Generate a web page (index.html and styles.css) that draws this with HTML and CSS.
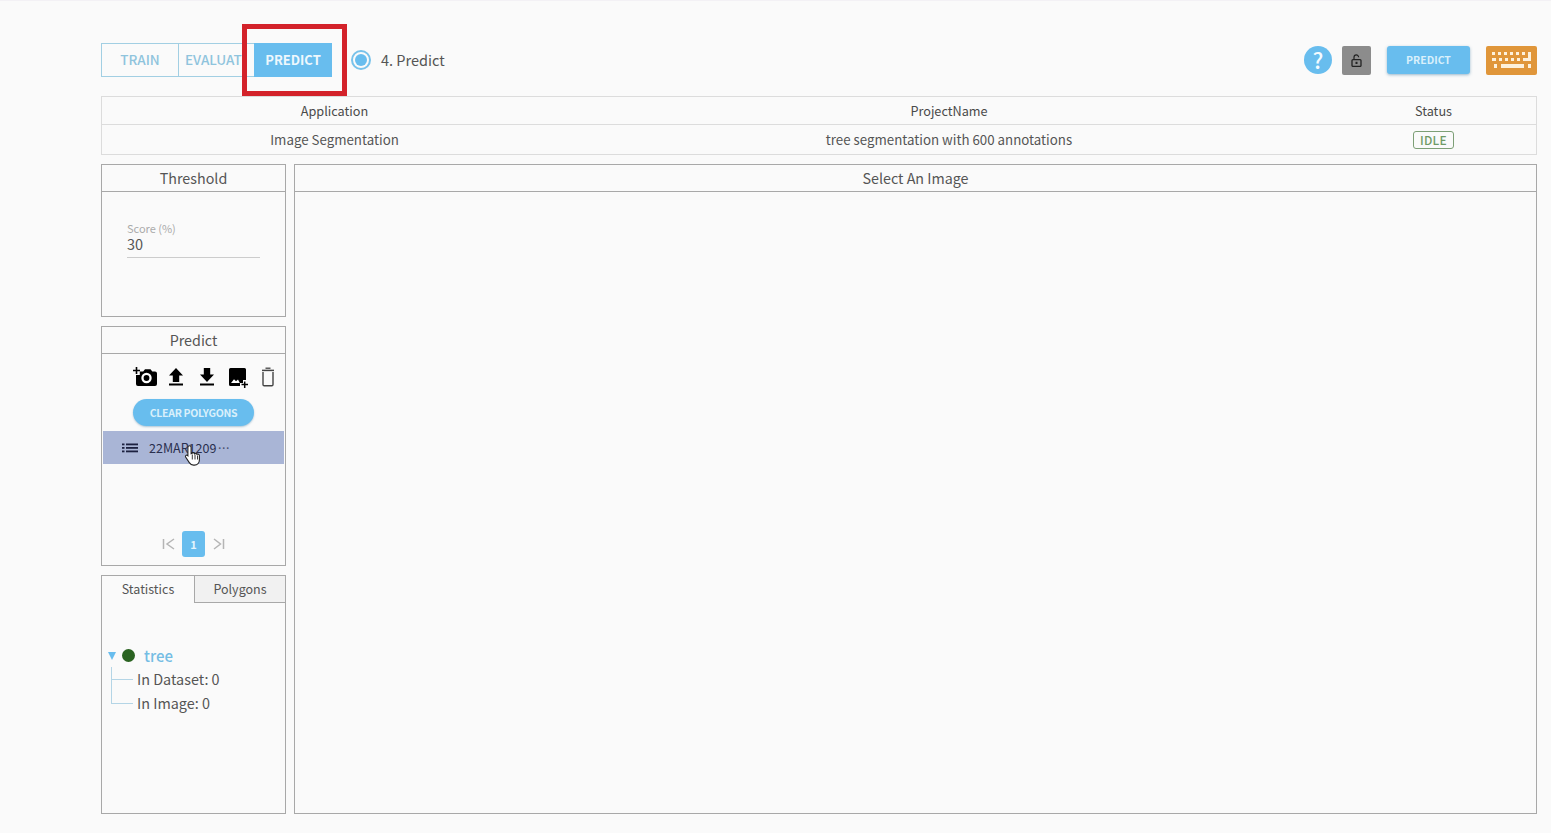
FILE: index.html
```html
<!DOCTYPE html>
<html lang="en">
<head>
<meta charset="utf-8">
<title>Predict</title>
<link rel="stylesheet" href="styles.css">
</head>
<body>
<div class="page">
  <header class="toolbar">
    <div class="steps">
      <button class="step step-train">TRAIN</button>
      <button class="step step-eval"><span class="step-clip">EVALUATE</span></button>
      <button class="step step-active">PREDICT</button>
      <div class="highlight"></div>
    </div>
    <span class="radio"><span class="radio-dot"></span></span>
    <span class="step-label">4. Predict</span>
    <div class="actions">
      <span class="help">?</span>
      <span class="lock">
        <svg width="11" height="13" viewBox="0 0 11 13"><path d="M3 6V3.200a2.300 2.300 0 0 1 4.600 0" fill="none" stroke="#222" stroke-width="1.200"/><rect x="1" y="5.600" width="9" height="6.800" rx="1" fill="none" stroke="#222" stroke-width="1.300"/><rect x="4.500" y="7.800" width="2" height="2.200" fill="#222"/></svg>
      </span>
      <button class="predict-btn">PREDICT</button>
      <span class="keyboard">
        <svg width="40" height="17" viewBox="0 0 40 17" fill="#fdf1dc"><rect x="0" y="0" width="3" height="3"/><rect x="6" y="0" width="3" height="3"/><rect x="12" y="0" width="3" height="3"/><rect x="18" y="0" width="3" height="3"/><rect x="24" y="0" width="3" height="3"/><rect x="30" y="0" width="3" height="3"/><rect x="36" y="0" width="3" height="9"/><rect x="0" y="6" width="4" height="3"/><rect x="7" y="6" width="3" height="3"/><rect x="13" y="6" width="3" height="3"/><rect x="19" y="6" width="3" height="3"/><rect x="25" y="6" width="3" height="3"/><rect x="31" y="6" width="8" height="3"/><rect x="2" y="12" width="3" height="4"/><rect x="9" y="12" width="23" height="4"/><rect x="36" y="12" width="3" height="4"/></svg>
      </span>
    </div>
  </header>

  <section class="info">
    <div class="info-row info-head">
      <div>Application</div>
      <div>ProjectName</div>
      <div>Status</div>
    </div>
    <div class="info-row info-body">
      <div>Image Segmentation</div>
      <div>tree segmentation with 600 annotations</div>
      <div><span class="badge">IDLE</span></div>
    </div>
  </section>

  <main class="workspace">
    <aside class="sidebar">
      <section class="panel panel-threshold">
        <h2 class="panel-title">Threshold</h2>
        <div class="field">
          <div class="field-label">Score (%)</div>
          <div class="field-value">30</div>
        </div>
      </section>

      <section class="panel panel-predict">
        <h2 class="panel-title">Predict</h2>
        <div class="tools">
          <svg width="24" height="24" viewBox="0 0 24 24"><path d="M0 5.500h7M3.500 2v7" stroke="#000" stroke-width="1.600" fill="none"/><path d="M3 10h3.800V6.500h3.400L12 4.200h5.500l1.800 2.300h2.700A2 2 0 0 1 24 8.500V19a2 2 0 0 1-2 2H5a2 2 0 0 1-2-2z" fill="#000"/><circle cx="13.500" cy="13" r="5.200" fill="#fff"/><circle cx="13.500" cy="13" r="2.900" fill="#000"/></svg>
          <svg width="20" height="24" viewBox="0 0 20 24"><path d="M9 3l7 7.500h-3.800V17H5.800v-6.500H2z" fill="#000"/><rect x="2" y="18.500" width="14" height="2" fill="#000"/></svg>
          <svg width="20" height="24" viewBox="0 0 20 24"><path d="M6.800 3h6.400v6.500H17L10 17 3 9.500h3.800z" fill="#000"/><rect x="3" y="18.500" width="14" height="2" fill="#000"/></svg>
          <svg width="22" height="24" viewBox="0 0 22 24"><path d="M3.500 3h14A1.500 1.500 0 0 1 19 4.500V15h-3v3h-3v3H3.500A1.500 1.500 0 0 1 2 19.500v-15A1.500 1.500 0 0 1 3.500 3z" fill="#000"/><path d="M4 18l3-3.800 2 2 2-1.700 1.800 3.500z" fill="#fff"/><path d="M14.500 19.500h6.500M17.700 16.500v6.500" stroke="#000" stroke-width="1.500"/></svg>
          <svg width="18" height="24" viewBox="0 0 18 24"><path d="M4 7v12.500c0 .7.500 1.200 1.200 1.200h7.600c.7 0 1.200-.5 1.200-1.200V7" fill="none" stroke="#444" stroke-width="1.400"/><path d="M3 5.400h12" stroke="#444" stroke-width="1.500"/><path d="M6.500 3.200h5" stroke="#444" stroke-width="1.300"/></svg>
        </div>
        <div class="clear-wrap"><button class="clear-btn">CLEAR POLYGONS</button></div>
        <div class="list-item">
          <svg class="list-icon" width="16" height="10" viewBox="0 0 16 10" fill="#1c2140"><rect x="0" y="0.500" width="2.500" height="1.800"/><rect x="4" y="0.500" width="12" height="1.800"/><rect x="0" y="4" width="2.500" height="1.800"/><rect x="4" y="4" width="12" height="1.800"/><rect x="0" y="7.500" width="2.500" height="1.800"/><rect x="4" y="7.500" width="12" height="1.800"/></svg>
          <span class="list-name">22MAR1209<span class="list-more">···</span></span>
          <svg class="cursor" width="18" height="25" viewBox="0 0 18 24"><path d="M5.500 2.200c1 0 1.600.7 1.600 1.700v6.300l1-.3c.2-1 1.900-1 2.300.1l.2.300c.6-.8 2.200-.6 2.400.5.900-.5 2.300 0 2.400 1.200v4.300c0 3-2 5.300-5 5.300H9.500c-2 0-3.200-1-4.200-2.500L1.600 13.500c-.7-1.200 1-2.600 2.100-1.500l.2.200V3.900c0-1 .6-1.700 1.600-1.700z" fill="#fff" stroke="#222" stroke-width="1.100"/><path d="M8.300 11v5M11 11v5M13.500 12v4" stroke="#222" stroke-width=".9"/></svg>
        </div>
        <nav class="pager">
          <svg width="14" height="12" viewBox="0 0 14 12"><path d="M2.500 1v10M13 1L6 6l7 5" fill="none" stroke="#b5b5b5" stroke-width="1.500"/></svg>
          <span class="page-num">1</span>
          <svg width="14" height="12" viewBox="0 0 14 12"><path d="M11.500 1v10M2 1l6.500 5L2 11" fill="none" stroke="#b5b5b5" stroke-width="1.500"/></svg>
        </nav>
      </section>

      <section class="panel panel-stats">
        <div class="tabs">
          <div class="tab tab-active">Statistics</div>
          <div class="tab tab-idle">Polygons</div>
        </div>
        <div class="tree">
          <div class="tree-root">
            <span class="caret"></span>
            <span class="tree-dot"></span>
            <span class="tree-name">tree</span>
          </div>
          <div class="tree-leaf leaf-first">In Dataset: 0</div>
          <div class="tree-leaf leaf-last">In Image: 0</div>
        </div>
      </section>
    </aside>

    <section class="panel panel-image">
      <h2 class="panel-title">Select An Image</h2>
    </section>
  </main>
</div>
</body>
</html>
```
FILE: styles.css
```css
* { box-sizing: border-box; }
html, body { margin: 0; height: 100%; }
body {
  background: #fafafa;
  color: #444;
  font-family: "Noto Sans CJK KR", "Noto Sans", sans-serif;
  font-size: 14px;
  overflow: hidden;
}
button { font-family: inherit; cursor: pointer; }
.page {
  height: 833px;
  padding: 43px 14px 19px 101px;
  display: flex;
  flex-direction: column;
  border-top: 1px solid #f3f1f5;
}
.toolbar {
  display: flex;
  align-items: center;
  height: 34px;
  margin-top: -1px;
}
.steps { display: flex; position: relative; height: 34px; }
.step {
  height: 34px;
  padding: 0 0 2px;
  font-size: 13.500px;
  font-weight: 500;
  border: 1px solid #a2cfe3;
  background: transparent;
  color: #8fc4dd;
}
.step-train { width: 78px; }
.step-eval {
  width: 76px;
  margin-left: -1px;
  border-right: 0;
  text-align: left;
  padding-left: 6px;
}
.step-clip { display: block; width: 58px; overflow: hidden; white-space: nowrap; }
.step-active {
  width: 78px;
  border: 0;
  background: #68bdee;
  color: #eef8fd;
  font-size: 13px;
  font-weight: 700;
}
.highlight {
  position: absolute;
  left: 141px;
  top: -19px;
  width: 105px;
  height: 72px;
  border: 5px solid #d3222a;
  pointer-events: none;
}
.radio {
  width: 20px;
  height: 20px;
  margin-left: 19px;
  border: 2px solid #78c2ea;
  border-radius: 50%;
  display: flex;
  align-items: center;
  justify-content: center;
}
.radio-dot { width: 12px; height: 12px; border-radius: 50%; background: #68bdee; }
.step-label { margin: 0 0 2px 10px; font-size: 14.500px; color: #555; }
.actions { margin-left: auto; display: flex; align-items: center; }
.help {
  width: 28px;
  height: 28px;
  border-radius: 50%;
  background: #68bdee;
  color: #f4fbff;
  font-size: 22px;
  font-weight: 500;
  line-height: 27px;
  text-align: center;
}
.lock {
  width: 29px;
  height: 29px;
  margin-left: 10px;
  background: #8c8c8c;
  border-radius: 2px;
  display: flex;
  align-items: center;
  justify-content: center;
}
.predict-btn {
  width: 83px;
  height: 28px;
  margin-left: 16px;
  padding: 0 0 1px;
  border: 0;
  border-radius: 3px;
  background: #68bdee;
  color: #d9f0fb;
  font-size: 10.500px;
  font-weight: 700;
  box-shadow: 0 1px 3px rgba(60, 120, 160, .5);
}
.keyboard {
  width: 51px;
  height: 29px;
  margin-left: 16px;
  background: #e0963a;
  border-radius: 2px;
  display: flex;
  align-items: center;
  justify-content: center;
}
.info {
  margin-top: 19px;
  border: 1px solid #dcdcdc;
  height: 59px;
  display: flex;
  flex-direction: column;
}
.info-row {
  display: grid;
  grid-template-columns: 465px 764px 1fr;
  align-items: center;
  text-align: center;
}
.info-head {
  height: 28px;
  border-bottom: 1px solid #dcdcdc;
  font-size: 12.700px;
  color: #4a4a4a;
}
.info-body { flex: 1; font-size: 13.300px; color: #555; }
.badge {
  display: inline-block;
  width: 41px;
  height: 18px;
  line-height: 15px;
  border: 1px solid #7d9f76;
  border-radius: 3px;
  color: #6f9a66;
  font-size: 12px;
  font-weight: 500;
  letter-spacing: .3px;
}
.workspace {
  flex: 1;
  margin-top: 9px;
  display: flex;
  gap: 8px;
  min-height: 0;
}
.sidebar {
  width: 185px;
  display: flex;
  flex-direction: column;
  gap: 9px;
}
.panel { border: 1px solid #a8a8a8; background: #fafafa; }
.panel-title {
  margin: 0;
  height: 27px;
  line-height: 26px;
  border-bottom: 1px solid #a8a8a8;
  text-align: center;
  font-size: 14.300px;
  font-weight: 400;
  color: #555;
}
.panel-threshold { height: 153px; }
.field {
  margin: 30px 25px 0 25px;
  height: 36px;
  border-bottom: 1px solid #ccc;
}
.field-label { font-size: 11px; color: #aaa; line-height: 13px; }
.field-value { font-size: 14.500px; color: #555; line-height: 17px; }
.panel-predict {
  height: 240px;
  display: flex;
  flex-direction: column;
}
.tools {
  display: flex;
  align-items: center;
  gap: 10px;
  height: 24px;
  margin-top: 11px;
  padding-left: 31px;
}
.clear-wrap { display: flex; justify-content: center; margin-top: 10px; }
.clear-btn {
  width: 121px;
  height: 27px;
  padding: 0;
  border: 0;
  border-radius: 14px;
  background: #68bdee;
  color: #d9f0fb;
  font-size: 10.500px;
  font-weight: 700;
  letter-spacing: -.3px;
  box-shadow: 0 1px 2px rgba(60, 120, 160, .4);
}
.list-item {
  position: relative;
  height: 33px;
  margin: 5px 1px 0 1px;
  background: #a9b5d6;
  display: flex;
  align-items: center;
  padding-left: 19px;
  color: #2a2f4e;
  font-size: 12.500px;
}
.list-icon { flex: none; }
.list-name { margin-left: 11px; }
.list-more { letter-spacing: -3px; color: #4a5070; }
.cursor { position: absolute; left: 81px; top: 12px; }
.pager {
  margin-top: auto;
  margin-bottom: 8px;
  display: flex;
  align-items: center;
  justify-content: center;
  gap: 7px;
}
.page-num {
  width: 23px;
  height: 26px;
  border-radius: 3px;
  background: #68bdee;
  color: #e4f5fd;
  font-size: 11px;
  font-weight: 700;
  text-align: center;
  line-height: 26px;
}
.panel-stats { flex: 1; min-height: 0; }
.tabs { display: flex; height: 27px; }
.tab { line-height: 26px; text-align: center; font-size: 12.500px; color: #555; }
.tab-active { width: 92px; }
.tab-idle {
  flex: 1;
  background: #f1f1f1;
  border-left: 1px solid #a8a8a8;
  border-bottom: 1px solid #a8a8a8;
}
.tree { padding: 40px 0 0 5px; }
.tree-root { display: flex; align-items: center; height: 24px; }
.caret {
  width: 0;
  height: 0;
  margin: 1px 0 0 1px;
  border-left: 4.500px solid transparent;
  border-right: 4.500px solid transparent;
  border-top: 8px solid #68bdee;
}
.tree-dot {
  width: 13px;
  height: 13px;
  margin-left: 6px;
  border-radius: 50%;
  background: #2a6321;
}
.tree-name { margin-left: 9px; font-size: 15px; font-weight: 500; color: #74bde4; }
.tree-leaf {
  position: relative;
  height: 24px;
  line-height: 24px;
  padding-left: 30px;
  font-size: 14.400px;
  color: #555;
}
.tree-leaf::before {
  content: "";
  position: absolute;
  left: 4px;
  top: 0;
  width: 21px;
  height: 12px;
  border-left: 1px solid #b4d5e6;
  border-bottom: 1px solid #b4d5e6;
}
.leaf-first::after {
  content: "";
  position: absolute;
  left: 4px;
  top: 12px;
  height: 12px;
  border-left: 1px solid #b4d5e6;
}
.panel-image { flex: 1; }
```
